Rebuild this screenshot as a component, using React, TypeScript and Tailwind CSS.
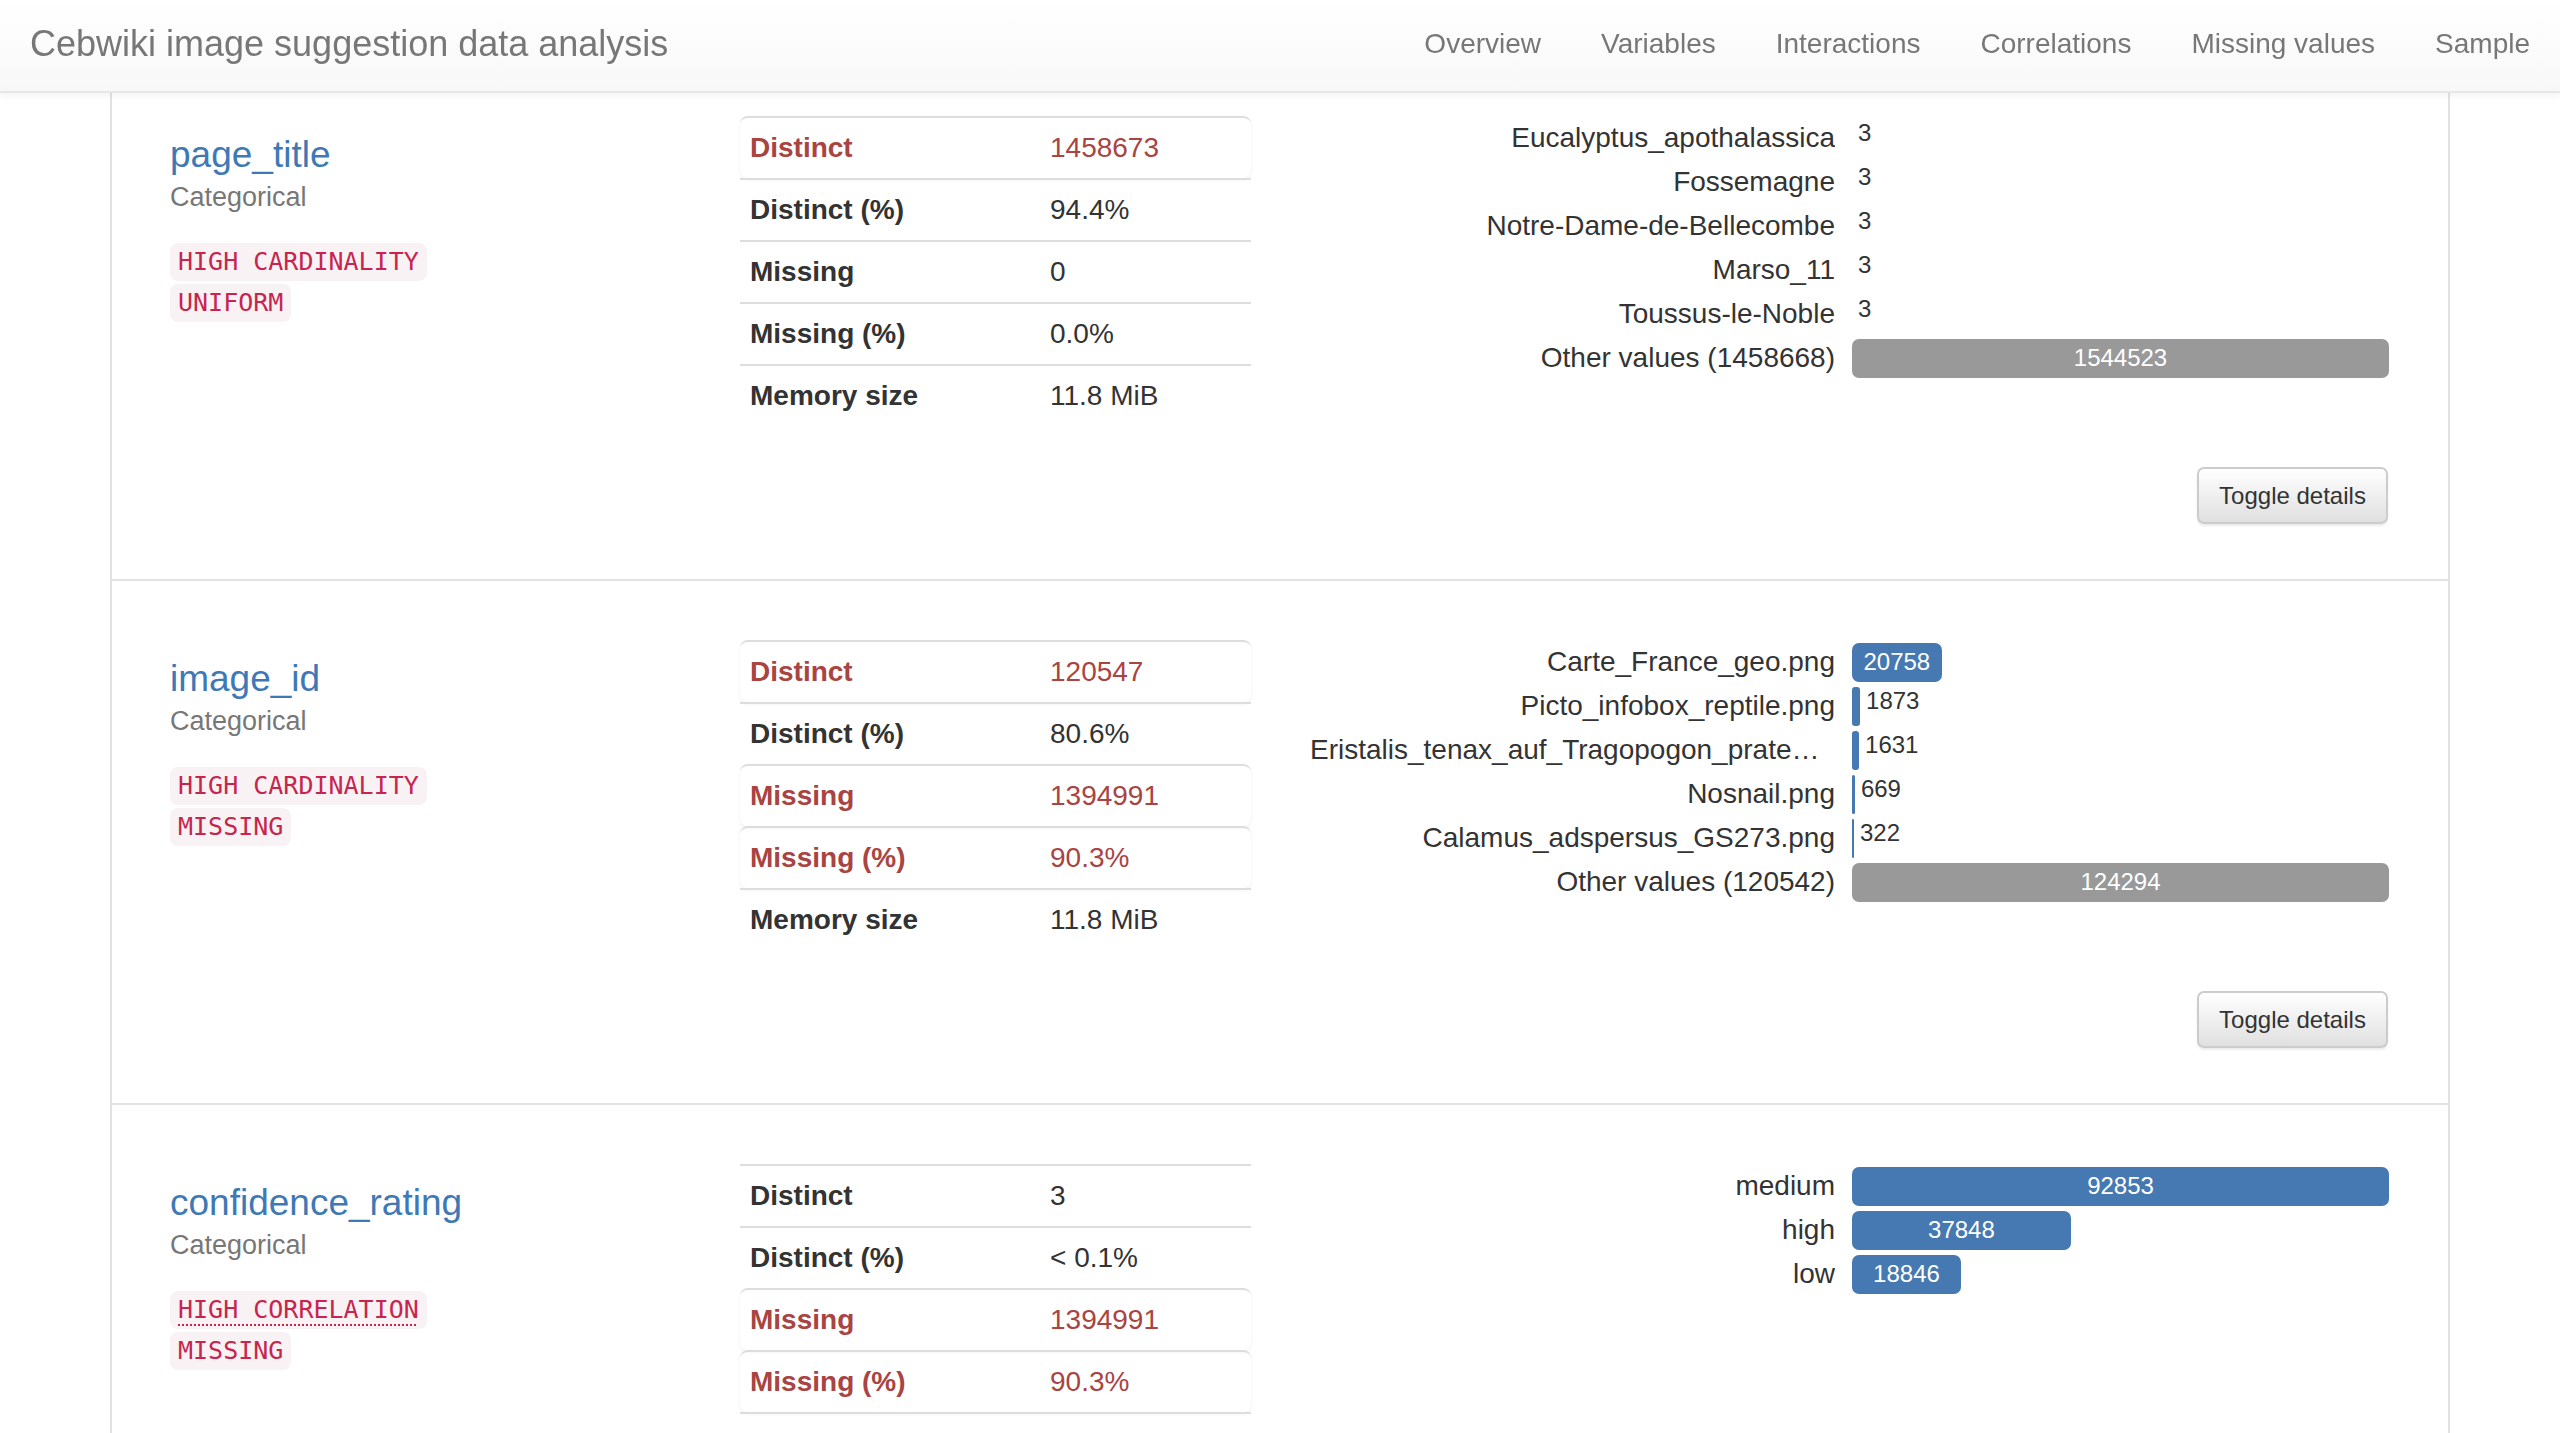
import React from 'react';

type Stat = { label: string; value: string; alert?: boolean };
type Freq = { label: string; count: number; other?: boolean };
type Variable = {
  name: string;
  type: string;
  tags: { text: string; abbr?: boolean }[];
  stats: Stat[];
  freqs: Freq[];
};

const SANS = "font-['Liberation_Sans',Arial,sans-serif]";

const variables: Variable[] = [
  {
    name: 'page_title',
    type: 'Categorical',
    tags: [{ text: 'HIGH CARDINALITY' }, { text: 'UNIFORM' }],
    stats: [
      { label: 'Distinct', value: '1458673', alert: true },
      { label: 'Distinct (%)', value: '94.4%' },
      { label: 'Missing', value: '0' },
      { label: 'Missing (%)', value: '0.0%' },
      { label: 'Memory size', value: '11.8 MiB' }
    ],
    freqs: [
      { label: 'Eucalyptus_apothalassica', count: 3 },
      { label: 'Fossemagne', count: 3 },
      { label: 'Notre-Dame-de-Bellecombe', count: 3 },
      { label: 'Marso_11', count: 3 },
      { label: 'Toussus-le-Noble', count: 3 },
      { label: 'Other values (1458668)', count: 1544523, other: true }
    ]
  },
  {
    name: 'image_id',
    type: 'Categorical',
    tags: [{ text: 'HIGH CARDINALITY' }, { text: 'MISSING' }],
    stats: [
      { label: 'Distinct', value: '120547', alert: true },
      { label: 'Distinct (%)', value: '80.6%' },
      { label: 'Missing', value: '1394991', alert: true },
      { label: 'Missing (%)', value: '90.3%', alert: true },
      { label: 'Memory size', value: '11.8 MiB' }
    ],
    freqs: [
      { label: 'Carte_France_geo.png', count: 20758 },
      { label: 'Picto_infobox_reptile.png', count: 1873 },
      { label: 'Eristalis_tenax_auf_Tragopogon_pratensis_01.jpg', count: 1631 },
      { label: 'Nosnail.png', count: 669 },
      { label: 'Calamus_adspersus_GS273.png', count: 322 },
      { label: 'Other values (120542)', count: 124294, other: true }
    ]
  },
  {
    name: 'confidence_rating',
    type: 'Categorical',
    tags: [{ text: 'HIGH CORRELATION', abbr: true }, { text: 'MISSING' }],
    stats: [
      { label: 'Distinct', value: '3' },
      { label: 'Distinct (%)', value: '< 0.1%' },
      { label: 'Missing', value: '1394991', alert: true },
      { label: 'Missing (%)', value: '90.3%', alert: true },
      { label: 'Memory size', value: '11.8 MiB' }
    ],
    freqs: [
      { label: 'medium', count: 92853 },
      { label: 'high', count: 37848 },
      { label: 'low', count: 18846 }
    ]
  }
];

const navLinks = ['Overview', 'Variables', 'Interactions', 'Correlations', 'Missing values', 'Sample'];

const BAR_MAX = 537;

function FreqTable({ freqs }: { freqs: Freq[] }) {
  const max = Math.max(...freqs.map((f) => f.count));
  return (
    <div className="flex flex-col">
      {freqs.map((f) => {
        const width = Math.max((f.count / max) * BAR_MAX, f.count >= 300 ? 2 : 0);
        const text = String(f.count);
        const fits = width > text.length * 14 + 16;
        return (
          <div key={f.label} className="flex h-[44px] items-center">
            <div className="w-[525px] shrink-0 overflow-hidden text-ellipsis whitespace-nowrap text-right text-[28px] leading-[40px] text-[#333]">
              {f.label}
            </div>
            <div className="ml-[17px] flex h-full w-[537px] items-center">
              {fits ? (
                <div
                  className={`flex h-[39px] items-center justify-center rounded-[7px] text-[24px] text-white ${
                    f.other ? 'bg-[#999999]' : 'bg-[#4679b1]'
                  }`}
                  style={{ width }}
                >
                  {text}
                </div>
              ) : (
                <div className="flex h-[39px] items-start">
                  {width > 0 && (
                    <div className="h-[39px] rounded-[3px] bg-[#4679b1]" style={{ width }} />
                  )}
                  <span className="-mt-[3px] ml-[6px] text-[24px] leading-[34px] text-[#333]">{text}</span>
                </div>
              )}
            </div>
          </div>
        );
      })}
    </div>
  );
}

function StatsTable({ stats }: { stats: Stat[] }) {
  return (
    <div className="w-[511px] shrink-0">
      {stats.map((s) => (
        <div
          key={s.label}
          className={`flex h-[62px] items-center border-t-2 border-[#dddddd] text-[28px] ${
            s.alert ? 'rounded-[8px] text-[#a94442] shadow-[0_2px_4px_rgba(0,0,0,0.06)]' : 'text-[#333]'
          }`}
        >
          <div className="w-[300px] pl-[10px] font-bold">{s.label}</div>
          <div className="pl-[10px]">{s.value}</div>
        </div>
      ))}
    </div>
  );
}

function VariableRow({ v }: { v: Variable }) {
  return (
    <div className="border-b-2 border-[#e2e1e8] pb-[55px] pt-[59px]">
      <div className="flex">
        <div className="w-[628px] shrink-0 pl-[58px]">
          <div className="mt-[17px] text-[37px] leading-[44px] text-[#3e79b6]">{v.name}</div>
          <div className="mt-[1px] text-[27px] leading-[38px] text-[#777]">{v.type}</div>
          <div className="mt-[27px] flex flex-col items-start gap-[3px]">
            {v.tags.map((t) => (
              <code
                key={t.text}
                className="rounded-[8px] bg-[#f9f2f4] px-[8px] py-[3px] font-['DejaVu_Sans_Mono',monospace] text-[25px] leading-[32px] text-[#c7254e]"
              >
                {t.abbr ? (
                  <span className="underline decoration-dotted decoration-2 underline-offset-[6px]">{t.text}</span>
                ) : (
                  t.text
                )}
              </code>
            ))}
          </div>
        </div>
        <StatsTable stats={v.stats} />
        <div className="ml-[59px]">
          <FreqTable freqs={v.freqs} />
        </div>
      </div>
      <div className="mt-[41px] flex justify-end pr-[60px]">
        <button className="h-[57px] w-[191px] rounded-[7px] border-2 border-[#cccccc] bg-gradient-to-b from-white to-[#e0e0e0] text-[24px] text-[#333] shadow-[0_2px_2px_rgba(0,0,0,0.08)]">
          Toggle details
        </button>
      </div>
    </div>
  );
}

export default function App() {
  return (
    <div className={`relative min-h-screen overflow-hidden bg-white ${SANS}`}>
      <nav className="fixed inset-x-0 top-0 z-10 flex h-[93px] items-center justify-between border-b-2 border-[#e7e7e7] bg-gradient-to-b from-white to-[#f8f8f8] pb-[3px] shadow-[0_2px_8px_rgba(0,0,0,0.06)]">
        <div className="pl-[30px] text-[36px] text-[#777]">Cebwiki image suggestion data analysis</div>
        <ul className="flex">
          {navLinks.map((l) => (
            <li key={l} className="px-[30px] text-[28px] text-[#777]">
              {l}
            </li>
          ))}
        </ul>
      </nav>
      <div className="mx-auto w-[2340px] pt-[57px]">
        <div className="border-x-2 border-[#e2e1e8]">
          {variables.map((v) => (
            <VariableRow key={v.name} v={v} />
          ))}
        </div>
      </div>
    </div>
  );
}
